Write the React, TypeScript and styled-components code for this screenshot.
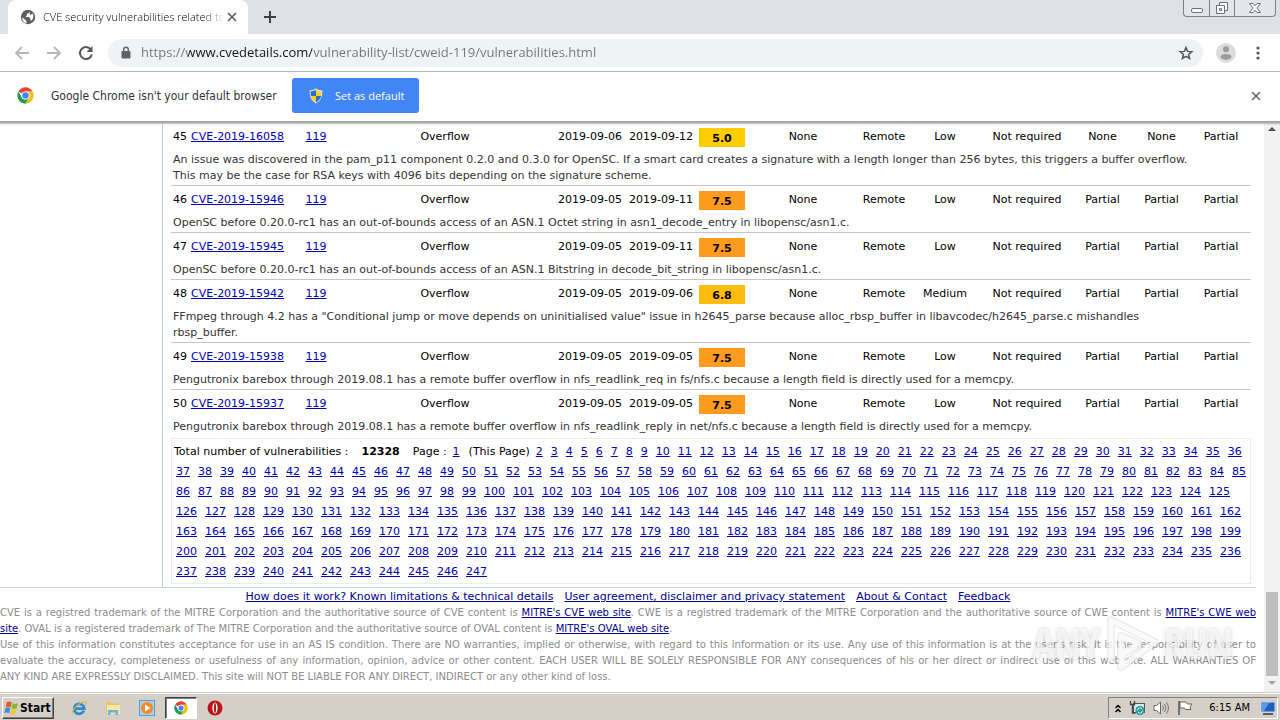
import React from 'react';
import styled, { createGlobalStyle, css } from 'styled-components';

const pageFont = '"DejaVu Sans", Verdana, sans-serif';
const uiFont = '"Open Sans", "Segoe UI", sans-serif';
const osFont = '"DejaVu Sans Condensed", Tahoma, sans-serif';

const GlobalStyle = createGlobalStyle`
  *, *::before, *::after { box-sizing: border-box; }
  html, body { margin: 0; }
  body { background: #fff; color: #000; font-family: ${pageFont}; font-size: 11px; overflow: hidden; }
  button { border: 0; margin: 0; padding: 0; background: none; font: inherit; color: inherit; }
`;

const Desktop = styled.div`
  display: flex;
  flex-direction: column;
  height: 100vh;
`;

/* ---------- Browser chrome ---------- */

const TabStrip = styled.header`
  display: flex;
  align-items: flex-start;
  height: 34px;
  padding-left: 8px;
  padding-right: 4px;
  background: #dee1e8;
`;

const Tab = styled.div`
  display: flex;
  align-items: center;
  width: 240px;
  height: 34px;
  padding: 0 10px 0 12px;
  border-radius: 8px 8px 0 0;
  background: #fff;
`;

const TabTitle = styled.span`
  flex: 1;
  margin: 0 4px 0 7px;
  overflow: hidden;
  white-space: nowrap;
  font: 300 11px/16px ${uiFont};
  color: #000;
  mask-image: linear-gradient(to right, #000 160px, transparent 182px);
`;

const IconButton = styled.button<{ $size?: number }>`
  display: grid;
  place-items: center;
  flex: none;
  width: ${(p) => p.$size ?? 16}px;
  height: ${(p) => p.$size ?? 16}px;
`;

const NewTab = styled(IconButton)`
  margin: 5px 0 0 10px;
`;

const WindowControls = styled.div`
  display: flex;
  height: 17px;
  margin-left: auto;
  border: 1px solid #7d828c;
  border-top: 0;
  border-radius: 0 0 4px 4px;
  background: #e2e5ec;
`;

const WindowButton = styled.button<{ $wide?: boolean }>`
  display: grid;
  place-items: center;
  width: ${(p) => (p.$wide ? 41 : 25)}px;
  height: 16px;
  & + & { border-left: 1px solid #7d828c; }
`;

const Toolbar = styled.div`
  display: flex;
  align-items: center;
  height: 38px;
  padding: 0 14px;
  border-bottom: 1px solid #b4b7ba;
  background: #fff;
`;

const NavButtons = styled.div`
  display: flex;
  gap: 16px;
  margin-right: 14px;
`;

const AddressBar = styled.label`
  display: flex;
  align-items: center;
  flex: 1;
  height: 28px;
  padding: 0 9px 0 10px;
  border-radius: 14px;
  background: #f0f3f6;
`;

const AddressInput = styled.input`
  flex: 1;
  min-width: 0;
  height: 24px;
  margin: 0 7px;
  padding: 0 0 2px;
  border: 0;
  outline: 0;
  font: 13px/22px ${uiFont};
  color: transparent;
  background: linear-gradient(to right, #6f7478 47px, #111417 47px, #111417 171px, #6f7478 171px);
  background-clip: text;
`;

const Trailing = styled.div`
  display: flex;
  align-items: center;
  gap: 12px;
  margin-left: 13px;
  margin-right: -2px;
`;

const InfoBar = styled.div`
  display: flex;
  align-items: center;
  height: 49px;
  padding: 0 16px 2px 17px;
  background: #fff;
  font: 12px/16px ${osFont};
  color: #303438;
`;

const InfoText = styled.span`
  width: 241px;
  margin-left: 17px;
  white-space: nowrap;
`;

const DefaultButton = styled.button`
  display: flex;
  align-items: center;
  gap: 11px;
  height: 35px;
  padding: 0 15px 0 16px;
  border-radius: 3px;
  background: #4285f4;
  color: #fff;
  font: 11px/16px ${uiFont};
  white-space: nowrap;
`;

const PushRight = styled.div`
  margin-left: auto;
`;

/* ---------- Web page ---------- */

const Viewport = styled.div`
  display: flex;
  flex: 1;
  min-height: 0;
  position: relative;
  &::before {
    content: '';
    position: absolute;
    inset: 0 0 auto 0;
    height: 4px;
    background: linear-gradient(#9a9a9a, #b5b5b5 50%, transparent);
  }
`;

const Page = styled.main`
  flex: 1;
  min-width: 0;
  padding-right: 8px;
  overflow: hidden;
`;

const Columns = styled.div`
  display: grid;
  grid-template-columns: 163px minmax(0, 1fr);
  border-bottom: 1px solid #c5d3e8;
`;

const Sidebar = styled.div`
  border-right: 1px solid #b9cfe9;
`;

const Content = styled.section`
  padding: 1px 5px 3px 8px;
`;

const CveTable = styled.table`
  width: 100%;
  table-layout: fixed;
  border-collapse: separate;
  border-spacing: 0;
  line-height: 16px;
`;

const Entry = styled.tr`
  height: 27px;
`;

const Cell = styled.td<{ $start?: boolean }>`
  padding: ${(p) => (p.$start ? '6px 0 0 2px' : '6px 0 0')};
  border-top: 1px solid #c6c6c6;
  text-align: ${(p) => (p.$start ? 'left' : 'center')};
  vertical-align: top;
  white-space: nowrap;
`;

const ScoreCell = styled(Cell)`
  padding: 5px 2px 0;
`;

const Score = styled.div<{ $level: number }>`
  height: 19px;
  line-height: 22px;
  font-weight: bold;
  background: ${(p) => (p.$level >= 7 ? '#ff9c20' : p.$level >= 6 ? '#ffbc10' : '#ffcc00')};
`;

const Summary = styled.td`
  padding: 3px 2px 1px;
  color: #333;
  white-space: pre-line;
`;

const Link = styled.a`
  color: #0000b4;
  text-decoration: underline;
`;

const Pager = styled.nav`
  display: flex;
  flex-wrap: wrap;
  column-gap: 4px;
  margin-top: 2px;
  padding: 3px 2px 1px;
  border: 1px solid #ebebeb;
  line-height: 20px;
  white-space: nowrap;
`;

const PageLink = styled(Link)`
  margin: 0 2px;
`;

const Total = styled.span`
  display: flex;
  gap: 13px;
  margin-right: 9px;
`;

const CurrentNote = styled.span`
  margin-left: 3px;
`;

const Footer = styled.footer`
  padding-top: 1px;
  line-height: 16px;
`;

const FooterLinks = styled.nav`
  display: flex;
  justify-content: center;
  gap: 11px;
  height: 16px;
`;

const FooterLink = styled(Link)`
  color: #000090;
`;

const Legal = styled.p<{ $last?: boolean }>`
  margin: 0;
  font-size: 10px;
  color: #8c8c8c;
  text-align: left;
  ${(p) =>
    !p.$last &&
    css`
      text-align: justify;
      text-align-last: justify;
    `}
`;

const Scrollbar = styled.div`
  display: flex;
  flex-direction: column;
  align-items: center;
  width: 16px;
  padding: 4px 0 5px;
  background: #f1f1f1;
`;

const Thumb = styled.div`
  width: 12px;
  height: 15%;
  margin: auto 0 3px;
  background: #bdbdbd;
`;

const Watermark = styled.div`
  position: absolute;
  right: 47px;
  bottom: 18px;
  display: flex;
  align-items: center;
  gap: 3px;
  pointer-events: none;
  font: bold 41px/60px "Open Sans Condensed", "Roboto Condensed", sans-serif;
  color: rgba(255, 255, 255, 0.7);
  text-shadow: 0 0 4px rgba(120, 120, 120, 0.35);
`;

/* ---------- Taskbar ---------- */

const Taskbar = styled.footer`
  display: flex;
  align-items: center;
  height: 28px;
  padding: 2px 2px 0;
  border-top: 1px solid #d4d0c8;
  box-shadow: inset 0 1px #fff;
  background: #d4d0c8;
  font: 11px/16px ${osFont};
`;

const StartButton = styled.button`
  display: flex;
  align-items: center;
  height: 22px;
  padding: 0 2px 0 1px;
  border: 1px solid;
  border-color: #fff #404040 #404040 #fff;
  box-shadow: inset -1px -1px #808080;
  font: bold 12px/16px ${osFont};
`;

const Launchers = styled.div`
  display: flex;
  align-items: center;
  gap: 2px;
  margin-left: 9px;
`;

const Launcher = styled.button<{ $active?: boolean }>`
  display: grid;
  place-items: center;
  width: 32px;
  height: 22px;
  ${(p) =>
    p.$active &&
    css`
      border: 1px solid;
      border-color: #404040 #fff #fff #404040;
      box-shadow: inset 1px 1px #808080;
      background: #fff;
    `}
`;

const Tray = styled.div`
  display: flex;
  align-items: center;
  gap: 8px;
  height: 22px;
  margin-left: auto;
  padding: 0 1px 0 4px;
  border: 1px solid;
  border-color: #808080 #fff #fff #808080;
`;

const Clock = styled.time`
  margin: 0 2px 0 8px;
`;

/* ---------- Drawings ---------- */

const Glyph = ({ size = 16, box = 16, children }: { size?: number; box?: number; children: React.ReactNode }) => (
  <svg width={size} height={size} viewBox={`0 0 ${box} ${box}`} fill="none" aria-hidden="true">
    {children}
  </svg>
);

const ChromeLogo = ({ size = 17 }: { size?: number }) => (
  <Glyph size={size} box={48}>
    <circle cx="24" cy="24" r="23" fill="#fff" />
    <path d="M24 24 4.100 12.500A23 23 0 0 1 43.900 12.500H24Z" fill="#ea4335" />
    <path d="M43.900 12.500A23 23 0 0 1 24 47L34 29.700A11.500 11.500 0 0 0 24 12.500Z" fill="#fbbc05" />
    <path d="M24 47A23 23 0 0 1 4.100 12.500L14 29.700A11.500 11.500 0 0 0 34 29.700Z" fill="#1f9d55" />
    <circle cx="24" cy="24" r="11.500" fill="#fff" />
    <circle cx="24" cy="24" r="9" fill="#4285f4" />
  </Glyph>
);

const Cross = ({ color = '#5f6368', size = 10 }: { color?: string; size?: number }) => (
  <Glyph size={size} box={10}>
    <path d="m1 1 8 8M9 1 1 9" stroke={color} strokeWidth="1.700" />
  </Glyph>
);

const Globe = () => (
  <Glyph>
    <circle cx="8" cy="8" r="7.200" fill="#5a5e63" />
    <path d="M2.300 8.200 6.500 12v2.300C3.800 13.700 1.900 11.200 2.300 8.200ZM9.200 2l-.400 2L6.800 5v1.600L5.500 8h3.300l1.500 1.600v1.800h1.200l1.300-1.300A6 6 0 0 0 12.600 4.300L10.800 6 9.600 4.800Z" fill="#fff" />
  </Glyph>
);

const Shield = () => (
  <Glyph>
    <path d="M8 .500c2 1.300 4 1.800 6.300 1.800.400 6-1.300 10.200-6.300 13.200C3 12.500 1.300 8.300 1.700 2.300 4 2.300 6 1.800 8 .500Z" fill="#e9e7da" />
    <path d="M8 2v6H2.800C2.600 6.500 2.600 5 2.700 3.300 4.700 3.200 6.500 2.800 8 2ZM8 8h5.200c-.700 2.700-2.400 4.700-5.200 6.400Z" fill="#2b6fc9" />
    <path d="M8 2v6h5.200c.200-1.500.200-3 .100-4.700C11.300 3.200 9.500 2.800 8 2ZM8 8H2.800c.7 2.700 2.400 4.700 5.200 6.400Z" fill="#f8cf2c" />
  </Glyph>
);

const AnyRunMark = () => (
  <svg width="58" height="62" viewBox="0 0 58 62" fill="none" aria-hidden="true">
    <g stroke="#cfcfcf" strokeOpacity="0.4" strokeWidth="8" strokeLinejoin="round">
      <path d="M8 50V8L52 30 18 55V24L36 32 18 43" />
    </g>
    <g stroke="#fff" strokeOpacity="0.75" strokeWidth="5" strokeLinejoin="round">
      <path d="M8 50V8L52 30 18 55V24L36 32 18 43" />
    </g>
  </svg>
);

/* ---------- Data ---------- */

type Cve = {
  no: number; id: string; published: string; updated: string; score: string;
  complexity: string; impact: string[]; text: string;
};

const P = 'Partial';
const N = 'None';

const cves: Cve[] = [
  { no: 45, id: 'CVE-2019-16058', published: '2019-09-06', updated: '2019-09-12', score: '5.0', complexity: 'Low', impact: [N, N, P],
    text: 'An issue was discovered in the pam_p11 component 0.2.0 and 0.3.0 for OpenSC. If a smart card creates a signature with a length longer than 256 bytes, this triggers a buffer overflow.\nThis may be the case for RSA keys with 4096 bits depending on the signature scheme.' },
  { no: 46, id: 'CVE-2019-15946', published: '2019-09-05', updated: '2019-09-11', score: '7.5', complexity: 'Low', impact: [P, P, P],
    text: 'OpenSC before 0.20.0-rc1 has an out-of-bounds access of an ASN.1 Octet string in asn1_decode_entry in libopensc/asn1.c.' },
  { no: 47, id: 'CVE-2019-15945', published: '2019-09-05', updated: '2019-09-11', score: '7.5', complexity: 'Low', impact: [P, P, P],
    text: 'OpenSC before 0.20.0-rc1 has an out-of-bounds access of an ASN.1 Bitstring in decode_bit_string in libopensc/asn1.c.' },
  { no: 48, id: 'CVE-2019-15942', published: '2019-09-05', updated: '2019-09-06', score: '6.8', complexity: 'Medium', impact: [P, P, P],
    text: 'FFmpeg through 4.2 has a "Conditional jump or move depends on uninitialised value" issue in h2645_parse because alloc_rbsp_buffer in libavcodec/h2645_parse.c mishandles\nrbsp_buffer.' },
  { no: 49, id: 'CVE-2019-15938', published: '2019-09-05', updated: '2019-09-05', score: '7.5', complexity: 'Low', impact: [P, P, P],
    text: 'Pengutronix barebox through 2019.08.1 has a remote buffer overflow in nfs_readlink_req in fs/nfs.c because a length field is directly used for a memcpy.' },
  { no: 50, id: 'CVE-2019-15937', published: '2019-09-05', updated: '2019-09-05', score: '7.5', complexity: 'Low', impact: [P, P, P],
    text: 'Pengutronix barebox through 2019.08.1 has a remote buffer overflow in nfs_readlink_reply in net/nfs.c because a length field is directly used for a memcpy.' },
];

const columnWidths = [18, 108, 38, 220, 70, 72, 50, 112, 50, 72, 92, 59, 59, 60];
const otherPages = Array.from({ length: 246 }, (_, i) => i + 2);
const footerLinks = [
  'How does it work? Known limitations & technical details',
  'User agreement, disclaimer and privacy statement',
  'About & Contact',
  'Feedback',
];

/* ---------- Parts ---------- */

const BrowserTop = () => (
  <>
    <TabStrip>
      <Tab>
        <Globe />
        <TabTitle>CVE security vulnerabilities related to</TabTitle>
        <IconButton $size={12} aria-label="Close tab"><Cross /></IconButton>
      </Tab>
      <NewTab $size={24} aria-label="New tab">
        <Glyph size={12} box={12}><path d="M6 0v12M0 6h12" stroke="#3c4043" strokeWidth="2" /></Glyph>
      </NewTab>
      <WindowControls>
        <WindowButton aria-label="Minimize">
          <Glyph><rect x="2.500" y="8.500" width="11" height="4" rx="1.500" fill="#fff" stroke="#6a6f79" /></Glyph>
        </WindowButton>
        <WindowButton aria-label="Restore">
          <Glyph>
            <path d="M5.500 2.500h8v8h-8z" fill="#fff" stroke="#6a6f79" />
            <path d="M2.500 5.500h8v8h-8z" fill="#fff" stroke="#6a6f79" />
            <path d="M5.500 8.500h2v2h-2z" stroke="#6a6f79" />
          </Glyph>
        </WindowButton>
        <WindowButton $wide aria-label="Close">
          <Glyph><path d="M2.500 3.500h3.500L8 5.700l2-2.200h3.500L10 8l3.500 4.500H10l-2-2.200-2 2.200H2.500L6 8Z" fill="#fff" stroke="#6a6f79" /></Glyph>
        </WindowButton>
      </WindowControls>
    </TabStrip>
    <Toolbar>
      <NavButtons>
        <IconButton aria-label="Back"><Glyph><path d="M15 8H2M8 2 2 8l6 6" stroke="#b5b8bb" strokeWidth="1.800" /></Glyph></IconButton>
        <IconButton aria-label="Forward"><Glyph><path d="M1 8h13M8 2l6 6-6 6" stroke="#b5b8bb" strokeWidth="1.800" /></Glyph></IconButton>
        <IconButton aria-label="Reload">
          <Glyph><path d="M12.600 4.200A6 6 0 1 0 13.800 9.500" stroke="#53575c" strokeWidth="2" /><path d="M14.500 1v6h-6Z" fill="#53575c" /></Glyph>
        </IconButton>
      </NavButtons>
      <AddressBar>
        <Glyph>
          <rect x="3.500" y="6" width="9" height="7.500" rx="1" fill="#5f6368" />
          <path d="M5.700 6.500V4.500a2.300 2.300 0 0 1 4.600 0v2" stroke="#5f6368" strokeWidth="1.400" />
        </Glyph>
        <AddressInput aria-label="Address" defaultValue="https://www.cvedetails.com/vulnerability-list/cweid-119/vulnerabilities.html" />
        <IconButton aria-label="Bookmark this page">
          <Glyph><path d="m8 2.500 1.600 3.900 4.200.300-3.200 2.700 1 4.100L8 11.300l-3.600 2.200 1-4.100L2.200 6.700l4.200-.300Z" stroke="#53575c" strokeWidth="1.500" /></Glyph>
        </IconButton>
      </AddressBar>
      <Trailing>
        <IconButton $size={20} aria-label="Profile">
          <Glyph size={20} box={20}>
            <circle cx="10" cy="10" r="10" fill="#dcdcdc" />
            <circle cx="10" cy="6.200" r="3" fill="#9b9b9b" />
            <ellipse cx="10" cy="13.800" rx="5.500" ry="2.900" fill="#9b9b9b" />
          </Glyph>
        </IconButton>
        <IconButton $size={20} aria-label="Menu">
          <Glyph><circle cx="8" cy="3" r="1.600" fill="#53575c" /><circle cx="8" cy="8" r="1.600" fill="#53575c" /><circle cx="8" cy="13" r="1.600" fill="#53575c" /></Glyph>
        </IconButton>
      </Trailing>
    </Toolbar>
    <InfoBar>
      <ChromeLogo />
      <InfoText>Google Chrome isn't your default browser</InfoText>
      <DefaultButton><Shield />Set as default</DefaultButton>
      <PushRight><IconButton aria-label="Dismiss"><Cross color="#6a6a6a" /></IconButton></PushRight>
    </InfoBar>
  </>
);

const CveRows = ({ cve }: { cve: Cve }) => (
  <>
    <Entry>
      <Cell $start>{cve.no}</Cell>
      <Cell $start><Link href="#">{cve.id}</Link></Cell>
      <Cell><Link href="#">119</Link></Cell>
      <Cell>Overflow</Cell>
      <Cell>{cve.published}</Cell>
      <Cell>{cve.updated}</Cell>
      <ScoreCell><Score $level={Number(cve.score)}>{cve.score}</Score></ScoreCell>
      <Cell>None</Cell>
      <Cell>Remote</Cell>
      <Cell>{cve.complexity}</Cell>
      <Cell>Not required</Cell>
      {cve.impact.map((value, i) => <Cell key={i}>{value}</Cell>)}
    </Entry>
    <tr><Summary colSpan={14}>{cve.text}</Summary></tr>
  </>
);

const PageFooter = () => (
  <Footer>
    <FooterLinks>
      {footerLinks.map((label) => <FooterLink key={label} href="#">{label}</FooterLink>)}
    </FooterLinks>
    <Legal>
      CVE is a registred trademark of the MITRE Corporation and the authoritative source of CVE content is <FooterLink href="#">MITRE's CVE web site</FooterLink>. CWE is a registred trademark of the MITRE Corporation and the authoritative source of CWE content is <FooterLink href="#">MITRE's CWE web</FooterLink>
    </Legal>
    <Legal $last>
      <FooterLink href="#">site</FooterLink>. OVAL is a registered trademark of The MITRE Corporation and the authoritative source of OVAL content is <FooterLink href="#">MITRE's OVAL web site</FooterLink>.
    </Legal>
    <Legal>
      Use of this information constitutes acceptance for use in an AS IS condition. There are NO warranties, implied or otherwise, with regard to this information or its use. Any use of this information is at the user's risk. It is the responsibility of user to
    </Legal>
    <Legal>
      evaluate the accuracy, completeness or usefulness of any information, opinion, advice or other content. EACH USER WILL BE SOLELY RESPONSIBLE FOR ANY consequences of his or her direct or indirect use of this web site. ALL WARRANTIES OF
    </Legal>
    <Legal $last>
      ANY KIND ARE EXPRESSLY DISCLAIMED. This site will NOT BE LIABLE FOR ANY DIRECT, INDIRECT or any other kind of loss.
    </Legal>
  </Footer>
);

const SystemTaskbar = () => (
  <Taskbar>
    <StartButton>
      <Glyph size={16} box={17}>
        <path d="M3 2.500c2-1.500 3.500-1 5.200.200L7 8C5.200 6.800 3.500 6.800 1.700 8Z" fill="#e8562a" />
        <path d="M9.200 3.200c2 1.300 3.800 1.200 5.800 0L13.700 8.500c-2 1.300-4 1.200-5.700 0Z" fill="#7cbb32" />
        <path d="M1.500 9c2-1.200 3.500-1.200 5.200 0l-1.300 5.200C3.700 13 2 13 .300 14.200Z" fill="#3c8ade" />
        <path d="M7.700 9.500c2 1.300 3.800 1.200 5.700 0L12 14.700c-2 1.300-3.800 1.200-5.600 0Z" fill="#f7c331" />
      </Glyph>
      Start
    </StartButton>
    <Launchers>
      <Launcher aria-label="Internet Explorer">
        <Glyph>
          <path d="M12.800 10.800A5 5 0 1 1 13.200 8.600H4" stroke="#2a8ad8" strokeWidth="2.800" />
          <path d="M1.500 14.500C-.500 11 9 1.500 14.300 1.500c1.500.5.800 2.500.200 3.500" stroke="#e0b838" strokeWidth="1.200" />
        </Glyph>
      </Launcher>
      <Launcher aria-label="Explorer">
        <Glyph>
          <path d="M1 2h5l1 1.500h7V14H1Z" fill="#e9c65c" />
          <path d="M2 5h13v9H2Z" fill="#f8e7a0" />
          <path d="M3 15V10h10v5h-2.500v-2.500h-5V15Z" fill="#67b5e0" />
        </Glyph>
      </Launcher>
      <Launcher aria-label="Media Player">
        <Glyph>
          <rect x=".500" y=".500" width="15" height="15" fill="#a9d2f0" stroke="#5b9bd0" />
          <circle cx="8" cy="8" r="6" fill="#f58a1f" />
          <path d="M6 4.500v7L11.500 8Z" fill="#fff" />
        </Glyph>
      </Launcher>
      <Launcher $active aria-label="Google Chrome"><ChromeLogo size={14} /></Launcher>
      <Launcher aria-label="Opera">
        <Glyph>
          <circle cx="8" cy="8" r="7.500" fill="#b8141a" />
          <ellipse cx="8" cy="8" rx="2.600" ry="5.500" fill="#fff" />
          <ellipse cx="8" cy="8" rx="1.100" ry="5" fill="#b8141a" />
        </Glyph>
      </Launcher>
    </Launchers>
    <Tray>
      <IconButton $size={8} aria-label="Show hidden icons">
        <Glyph size={10} box={10}><path d="m2.500 4 2.500-2.500L7.500 4M2.500 8 5 5.500 7.500 8" stroke="#000" strokeWidth="1.500" /></Glyph>
      </IconButton>
      <IconButton aria-label="Network">
        <Glyph>
          <rect x="4.500" y="3.500" width="11" height="9" fill="#cfe6ea" stroke="#555" />
          <path d="M1.500 1v3.500h4V1M3.500 4.500V13h3" stroke="#444" strokeWidth="1.300" />
          <circle cx="11" cy="10.500" r="4.500" fill="#2f9a9a" />
          <path d="M8.500 10.500a2.500 2.500 0 0 1 4.500-1.500M13.500 10.500A2.500 2.500 0 0 1 9 12" stroke="#d8f4f0" />
        </Glyph>
      </IconButton>
      <IconButton aria-label="Volume">
        <Glyph>
          <path d="M1 5.500h2.500L7.500 2v12L3.500 10.500H1Z" fill="#fff" stroke="#666" />
          <path d="M9.500 5.500q2 2.500 0 5M11.500 4q3 4 0 8M13.500 2.500q4 5.500 0 11" stroke="#777" />
        </Glyph>
      </IconButton>
      <IconButton aria-label="Action Center">
        <Glyph><path d="M2 1v14" stroke="#555" strokeWidth="1.500" /><path d="M3 2h6l1.500 2H15l-2 3 1 2.500H8.500L7.500 8H3Z" fill="#fff" stroke="#666" /></Glyph>
      </IconButton>
      <Clock>6:15 AM</Clock>
      <IconButton aria-label="Show desktop">
        <Glyph>
          <rect x="1" y="2" width="14" height="10" fill="#1c62bd" stroke="#c7d6ea" />
          <path d="M2 3h7L4 11H2Z" fill="#5c9ce4" />
          <path d="M3 14h10" stroke="#333" strokeWidth="1.500" />
        </Glyph>
      </IconButton>
    </Tray>
  </Taskbar>
);

export default function App() {
  return (
    <Desktop>
      <GlobalStyle />
      <BrowserTop />
      <Viewport>
        <Page>
          <Columns>
            <Sidebar />
            <Content>
              <CveTable>
                <colgroup>{columnWidths.map((w, i) => <col key={i} width={w} />)}</colgroup>
                <tbody>{cves.map((cve) => <CveRows key={cve.no} cve={cve} />)}</tbody>
              </CveTable>
              <Pager aria-label="Result pages">
                <Total>Total number of vulnerabilities : <b>12328</b></Total>
                <span>Page :</span>
                <PageLink href="#">1</PageLink>
                <CurrentNote>(This Page)</CurrentNote>
                {otherPages.map((n) => <PageLink key={n} href="#">{n}</PageLink>)}
              </Pager>
            </Content>
          </Columns>
          <PageFooter />
        </Page>
        <Scrollbar aria-hidden="true">
          <Glyph size={8} box={8}><path d="M0 6 4 2l4 4Z" fill="#505050" /></Glyph>
          <Thumb />
          <Glyph size={8} box={8}><path d="M0 2l4 4 4-4Z" fill="#a3a3a3" /></Glyph>
        </Scrollbar>
        <Watermark aria-hidden="true"><span>ANY</span><AnyRunMark /><span>RUN</span></Watermark>
      </Viewport>
      <SystemTaskbar />
    </Desktop>
  );
}
